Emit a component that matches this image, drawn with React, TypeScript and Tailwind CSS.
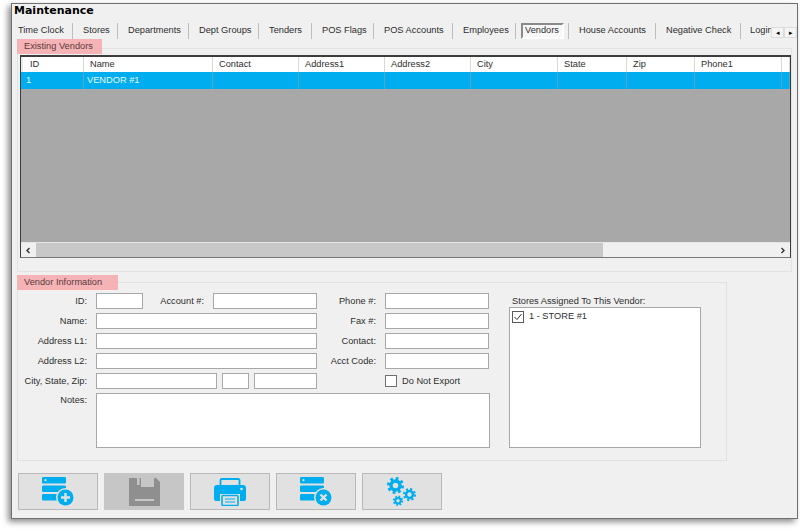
import React from "react";

const tabs: [string, number][] = [
  ["Time Clock", 65],
  ["Stores", 45],
  ["Departments", 71],
  ["Dept Groups", 70],
  ["Tenders", 53],
  ["POS Flags", 62],
  ["POS Accounts", 79],
  ["Employees", 63],
];
const tabs2: [string, number][] = [
  ["House Accounts", 87],
  ["Negative Check", 85],
];
const cols: [string, number][] = [
  ["ID", 61],
  ["Name", 129],
  ["Contact", 86],
  ["Address1", 86],
  ["Address2", 86],
  ["City", 87],
  ["State", 69],
  ["Zip", 68],
  ["Phone1", 87],
  ["", 8],
];

function Tab({ label, width }: { label: string; width: number }) {
  return (
    <div className="flex h-[16px] shrink-0 items-center border-r border-[#bdbdbd] pl-[10px]" style={{ width }}>
      {label}
    </div>
  );
}

function Legend({ label, width }: { label: string; width: number }) {
  return (
    <div className="flex h-[15px] items-center bg-[#f5b3b6] pl-[7px] whitespace-nowrap text-[#5a3a3c]" style={{ width }}>
      {label}
    </div>
  );
}

function Input({ w }: { w: number }) {
  return <div className="h-[16px] shrink-0 border border-[#a8a8a8] bg-white" style={{ width: w }} />;
}

function Label({ w, text }: { w: number; text: string }) {
  return (
    <div className="shrink-0 pt-px pr-[9px] text-right whitespace-nowrap" style={{ width: w }}>
      {text}
    </div>
  );
}

function Stack() {
  return (
    <g fill="#00aeef">
      <rect x="0" y="0" width="24" height="6.5" rx="1.2" />
      <rect x="0" y="8.5" width="24" height="6.5" rx="1.2" />
      <rect x="0" y="17" width="24" height="6.5" rx="1.2" />
      <circle cx="3.5" cy="3.2" r="1.1" fill="#e1e1e1" />
      <circle cx="23.5" cy="20.5" r="9.5" fill="#e1e1e1" />
      <circle cx="23.5" cy="20.5" r="8" />
    </g>
  );
}

function AddIcon() {
  return (
    <svg width="32" height="29" viewBox="0 0 32 29">
      <Stack />
      <path d="M23.5 16v9M19 20.5h9" stroke="#e1e1e1" strokeWidth="2.4" fill="none" />
    </svg>
  );
}

function DeleteIcon() {
  return (
    <svg width="32" height="29" viewBox="0 0 32 29">
      <Stack />
      <path d="M20.5 17.5l6 6M26.5 17.5l-6 6" stroke="#e1e1e1" strokeWidth="2.4" fill="none" />
    </svg>
  );
}

function SaveIcon() {
  return (
    <svg width="31" height="28" viewBox="0 0 31 28">
      <path d="M0 0h12v9h13V0h2l4 4v24H0z" fill="#8f8f8f" />
      <rect x="8" y="0" width="2.6" height="7" fill="#c6c6c6" />
      <rect x="6" y="21" width="19" height="2" fill="#c6c6c6" />
    </svg>
  );
}

function PrintIcon() {
  return (
    <svg width="32" height="28" viewBox="0 0 32 28">
      <path d="M6.5 8V2.2A1.2 1.2 0 0 1 7.7 1h16.6a1.2 1.2 0 0 1 1.2 1.2V8" fill="none" stroke="#00aeef" strokeWidth="1.8" />
      <path d="M3 7h26a3 3 0 0 1 3 3v11a2 2 0 0 1-2 2h-4v-7H6v7H2a2 2 0 0 1-2-2V10a3 3 0 0 1 3-3z" fill="#00aeef" />
      <circle cx="27.5" cy="11" r="1.3" fill="#e1e1e1" />
      <rect x="8" y="17.5" width="16" height="10" rx="1" fill="#e1e1e1" stroke="#00aeef" strokeWidth="1.6" />
      <path d="M11 21h10M11 24h10" stroke="#00aeef" strokeWidth="1.2" />
    </svg>
  );
}

function Gear({ cx, cy, hole, body, outer }: { cx: number; cy: number; hole: number; body: number; outer: number }) {
  const toothR = (body + outer) / 2 - 0.3;
  const d = (2 * Math.PI * toothR) / 16;
  return (
    <g fill="none" stroke="#00aeef">
      <circle cx={cx} cy={cy} r={(hole + body) / 2} strokeWidth={body - hole} />
      <circle cx={cx} cy={cy} r={toothR} strokeWidth={outer - body + 0.6} strokeDasharray={`${d} ${d}`} />
    </g>
  );
}

function GearsIcon() {
  return (
    <svg width="30" height="29" viewBox="0 0 30 29">
      <Gear cx={8.5} cy={8.5} hole={2.8} body={6.2} outer={8.5} />
      <Gear cx={22.5} cy={17.5} hole={2.2} body={4.7} outer={6.5} />
      <Gear cx={11} cy={23.7} hole={1.7} body={3.7} outer={5.2} />
    </svg>
  );
}

function ActionButton({ children, disabled }: { children: React.ReactNode; disabled?: boolean }) {
  return (
    <div
      className={
        disabled
          ? "flex h-[37px] w-[80px] items-center justify-center border border-[#c6c6c6] bg-[#c6c6c6]"
          : "flex h-[37px] w-[80px] items-center justify-center border border-[#b8b8b8] bg-[#e1e1e1]"
      }
    >
      {children}
    </div>
  );
}

function Chevron({ d }: { d: string }) {
  return (
    <svg width="7" height="7" viewBox="0 0 7 7">
      <path d={d} stroke="#333" strokeWidth="1.4" fill="none" />
    </svg>
  );
}

export default function App() {
  return (
    <div className="h-[531px] w-[800px] overflow-hidden bg-white pt-[3px] pl-[11px] font-['Liberation_Sans',Arial,sans-serif] text-[9.25px] text-[#2e2e2e]">
      <div className="flex h-[516px] w-[787px] flex-col border border-[#707070] bg-[#f0f0f0] shadow-[-3px_3px_6px_rgba(0,0,0,0.45)]">
        <div className="pl-[2px] font-['DejaVu_Sans',sans-serif] text-[11px] leading-[13px] font-bold text-black">
          Maintenance
        </div>
        <div className="mt-[5px] flex h-[17px] items-center whitespace-nowrap">
          {tabs.map(([l, w], i) => (
            <div key={l} className={i === 0 ? "-ml-[4px]" : ""}>
              <Tab label={l} width={w} />
            </div>
          ))}
          <div className="flex h-[16px] w-[53px] shrink-0 items-center justify-center border-r border-[#bdbdbd]">
            <div className="flex h-[16px] w-[43px] items-center justify-center border-2 border-t-[#8a8a8a] border-r-white border-b-white border-l-[#8a8a8a] bg-[#f7f7f7] pt-[1px]">
              Vendors
            </div>
          </div>
          {tabs2.map(([l, w]) => (
            <Tab key={l} label={l} width={w} />
          ))}
          <div className="flex h-[16px] w-[30px] shrink-0 items-center overflow-hidden pl-[9px]">Login</div>
          <div className="mt-[3px] flex h-[11px] shrink-0 text-[7px] leading-none text-black">
            <div className="flex w-[13px] items-center justify-center border border-[#dcdcdc] bg-[#f4f4f4]">◂</div>
            <div className="flex w-[13px] items-center justify-center border border-[#dcdcdc] bg-[#f4f4f4]">▸</div>
          </div>
        </div>

        {/* Existing Vendors */}
        <div className="mt-[9px] ml-[5px] h-[224px] w-[775px] border border-[#e2e2e2]">
          <div className="-mt-[10px] -ml-[1px]">
            <Legend label="Existing Vendors" width={85} />
          </div>
          <div className="mt-[1px] ml-[2px] flex h-[203px] w-[771px] flex-col border border-t-2 border-[#3c3c3c] border-b-[#777777]">
            <div className="flex h-[15px] shrink-0 bg-white">
              <div className="w-[2px] shrink-0 bg-[#e8e8e8]" />
              {cols.map(([c, w], i) => (
                <div
                  key={i}
                  className={
                    i === 0
                      ? "flex shrink-0 items-center border-r border-[#d8d8d8] pl-[7px]"
                      : "flex shrink-0 items-center border-r border-[#d8d8d8] pl-[6px]"
                  }
                  style={{ width: w }}
                >
                  {c}
                </div>
              ))}
            </div>
            <div className="flex h-[17px] shrink-0 bg-[#00aeef] text-[#e8f8ff]">
              <div className="w-[2px] shrink-0" />
              {cols.map(([, w], i) => (
                <div
                  key={i}
                  className="flex shrink-0 items-center border-r border-[#55a5c8] pl-[3px]"
                  style={{ width: w }}
                >
                  {i === 0 ? "1" : i === 1 ? "VENDOR #1" : ""}
                </div>
              ))}
            </div>
            <div className="flex-1 border-b border-[#e6e6e6] bg-[#a8a8a8]" />
            <div className="flex h-[14px] shrink-0 items-center bg-[#f0f0f0]">
              <div className="flex w-[15px] shrink-0 justify-center">
                <Chevron d="M4.5 1L2 3.5 4.5 6" />
              </div>
              <div className="h-full w-[567px] shrink-0 bg-[#c8c8c8]" />
              <div className="flex-1" />
              <div className="flex w-[15px] shrink-0 justify-center">
                <Chevron d="M2.5 1L5 3.5 2.5 6" />
              </div>
            </div>
          </div>
        </div>

        {/* Vendor Information */}
        <div className="mt-[10px] ml-[5px] h-[179px] w-[710px] border border-[#e2e2e2]">
          <div className="-mt-[8px] -ml-[1px]">
            <Legend label="Vendor Information" width={101} />
          </div>
          <div className="mt-[3px] flex">
            <div className="flex w-[472px] shrink-0 flex-col gap-[4px]">
              <div className="flex items-center">
                <Label w={78} text="ID:" />
                <Input w={47} />
                <Label w={70} text="Account #:" />
                <Input w={104} />
                <Label w={68} text="Phone #:" />
                <Input w={104} />
              </div>
              <div className="flex items-center">
                <Label w={78} text="Name:" />
                <Input w={221} />
                <Label w={68} text="Fax #:" />
                <Input w={104} />
              </div>
              <div className="flex items-center">
                <Label w={78} text="Address L1:" />
                <Input w={221} />
                <Label w={68} text="Contact:" />
                <Input w={104} />
              </div>
              <div className="flex items-center">
                <Label w={78} text="Address L2:" />
                <Input w={221} />
                <Label w={68} text="Acct Code:" />
                <Input w={104} />
              </div>
              <div className="flex items-center">
                <Label w={78} text="City, State, Zip:" />
                <Input w={121} />
                <div className="w-[5px] shrink-0" />
                <Input w={27} />
                <div className="w-[5px] shrink-0" />
                <Input w={63} />
                <div className="w-[68px] shrink-0" />
                <div className="h-[12px] w-[12px] shrink-0 border border-[#6f6f6f] bg-white" />
                <div className="ml-[5px] pt-px whitespace-nowrap">Do Not Export</div>
              </div>
              <div className="flex items-start">
                <Label w={78} text="Notes:" />
                <div className="h-[55px] w-[394px] shrink-0 border border-[#a8a8a8] bg-white" />
              </div>
            </div>
            <div className="ml-[19px] flex flex-col">
              <div className="ml-[3px] h-[14px] pt-[2px] leading-[12px] whitespace-nowrap">Stores Assigned To This Vendor:</div>
              <div className="h-[141px] w-[192px] border border-[#a8a8a8] bg-white pt-[2px] pl-[2px]">
                <div className="flex items-center gap-[5px]">
                  <svg width="12" height="12" viewBox="0 0 12 12">
                    <rect x="0.5" y="0.5" width="11" height="11" fill="white" stroke="#5a5a5a" />
                    <path d="M2.5 6l2.5 2.5 4.5-5.5" stroke="#333" strokeWidth="1" fill="none" />
                  </svg>
                  <span>1 - STORE #1</span>
                </div>
              </div>
            </div>
          </div>
        </div>

        {/* Buttons */}
        <div className="mt-[12px] ml-[6px] flex gap-[6px]">
          <ActionButton><AddIcon /></ActionButton>
          <ActionButton disabled><SaveIcon /></ActionButton>
          <ActionButton><PrintIcon /></ActionButton>
          <ActionButton><DeleteIcon /></ActionButton>
          <ActionButton><GearsIcon /></ActionButton>
        </div>
      </div>
    </div>
  );
}
